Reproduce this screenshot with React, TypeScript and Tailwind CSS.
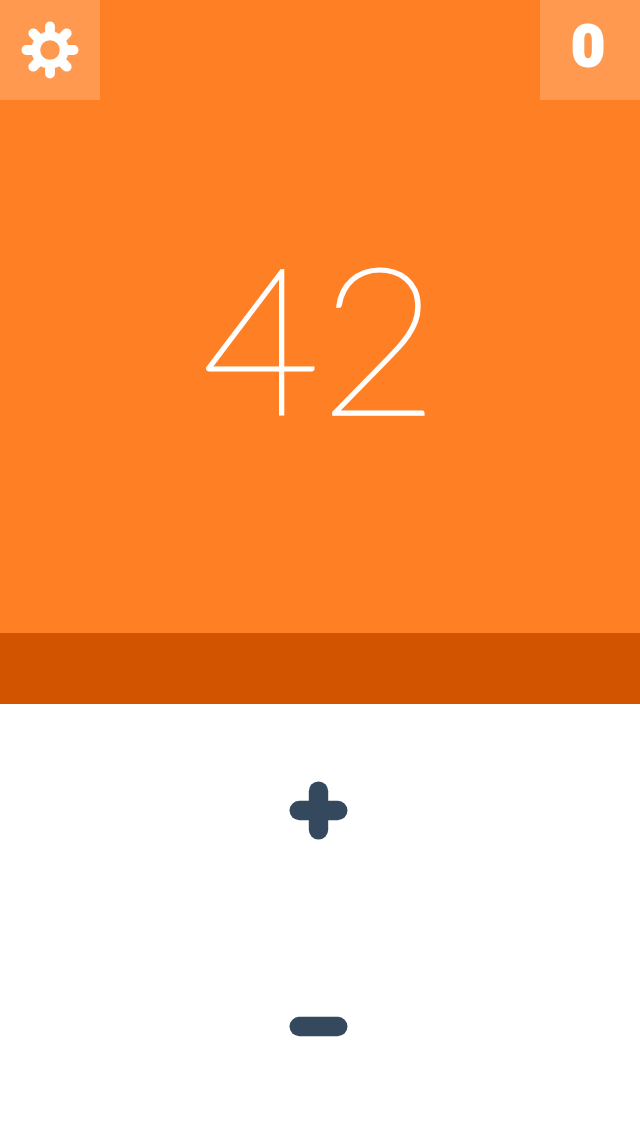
import React, { useState } from "react";

const TEETH = [0, 45, 90, 135, 180, 225, 270, 315];

function GearIcon() {
  return (
    <svg viewBox="0 0 60 60" className="size-15" aria-hidden="true">
      <circle cx="30" cy="30" r="14.2" fill="none" stroke="currentColor" strokeWidth="8.8" />
      {TEETH.map((angle) => (
        <path
          key={angle}
          d="M30 14V6.4"
          stroke="currentColor"
          strokeWidth="9.8"
          strokeLinecap="round"
          transform={`rotate(${angle} 30 30)`}
        />
      ))}
    </svg>
  );
}

function PlusIcon() {
  return (
    <svg viewBox="0 0 60 60" className="size-15" fill="currentColor" aria-hidden="true">
      <rect x="1.5" y="20.8" width="58" height="19.4" rx="9.7" />
      <rect x="20.8" y="1.5" width="19.4" height="58" rx="9.7" />
    </svg>
  );
}

function MinusIcon() {
  return (
    <svg viewBox="0 0 60 60" className="size-15" fill="currentColor" aria-hidden="true">
      <rect x="1.5" y="20.8" width="58" height="19.4" rx="9.7" />
    </svg>
  );
}

export default function App() {
  const [value, setValue] = useState(42);

  return (
    <main className="grid min-h-screen grid-rows-[704fr_432fr] bg-white">
      <section className="flex flex-col bg-[#ff7f24] text-white">
        <header className="flex justify-between">
          <button
            type="button"
            aria-label="Settings"
            className="flex size-25 items-center justify-center bg-[#ff994f]"
          >
            <GearIcon />
          </button>
          <div className="flex size-25 items-center justify-center bg-[#ff994f] pr-1 pb-2 font-[Roboto,sans-serif] text-[58px] leading-none font-black [-webkit-text-stroke:2px_white]">
            0
          </div>
        </header>
        <div className="flex grow items-center justify-center pb-16">
          <output className="font-[Lato,sans-serif] text-[204px] leading-none font-thin [-webkit-text-stroke:3px_white]">
            {value}
          </output>
        </div>
        <div className="h-[71px] bg-[#d35400]" />
      </section>
      <section className="grid grid-rows-2 text-[#34495e]">
        <button
          type="button"
          aria-label="Plus"
          onClick={() => setValue(value + 1)}
          className="flex items-center justify-center pr-1 pb-1"
        >
          <PlusIcon />
        </button>
        <button
          type="button"
          aria-label="Minus"
          onClick={() => setValue(value - 1)}
          className="flex items-center justify-center pr-1 pb-1"
        >
          <MinusIcon />
        </button>
      </section>
    </main>
  );
}
